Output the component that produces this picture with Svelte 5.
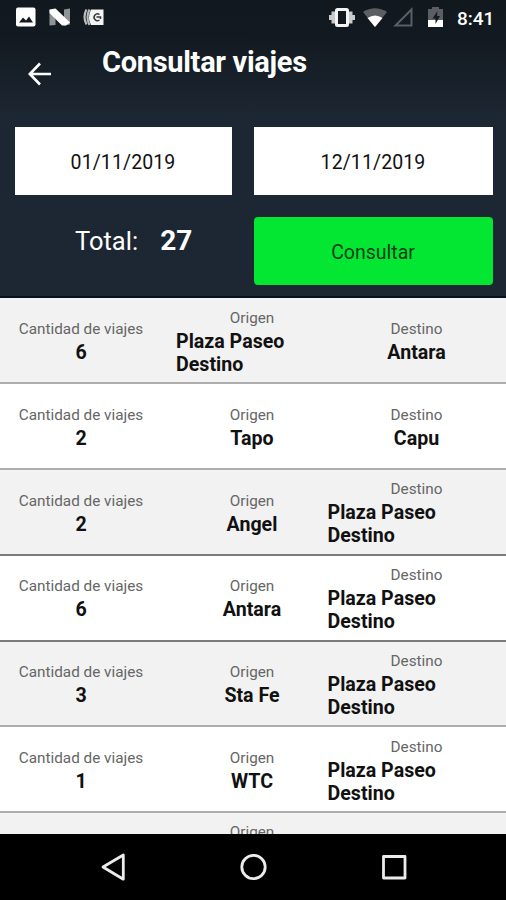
<script>
	let desde = '01/11/2019';
	let hasta = '12/11/2019';
	let total = 27;

	const PLAZA = 'Plaza Paseo Destino';

	let viajes = [
		{ cantidad: 6, origen: PLAZA, destino: 'Antara' },
		{ cantidad: 2, origen: 'Tapo', destino: 'Capu' },
		{ cantidad: 2, origen: 'Angel', destino: PLAZA },
		{ cantidad: 6, origen: 'Antara', destino: PLAZA },
		{ cantidad: 3, origen: 'Sta Fe', destino: PLAZA },
		{ cantidad: 1, origen: 'WTC', destino: PLAZA },
		{ cantidad: 1, origen: PLAZA, destino: 'Tapo' }
	];
</script>

<div class="screen">
	<header>
		<div class="status">
			<svg class="left-icons" width="90" height="22" viewBox="0 0 90 22">
				<rect x="0" y="0.500" width="19.500" height="19" rx="2" fill="#fff" />
				<path d="M3 15.500l4-5 3 3 3-4 4 6z" fill="#141a20" />
				<path d="M33.500 3h6v15l-6 .5zM48 2.500l6-1v16l-6 1z" fill="#8f9396" />
				<path d="M33.500 2.500l6-1 14.500 14-4 3h-4L33.500 6z" fill="#fff" />
				<path d="M75 2.500h12.500v15.500H75q-4-7 0-15.500z" fill="#f4f4f4" />
				<path d="M83.500 7.500a3.400 3.400 0 1 0 0 5.500M80.500 10h4v2" fill="none" stroke="#30363b" stroke-width="1.500" />
				<path d="M70.500 2.500q-4 7.500 0 15M73.500 2.500q-4 8 0 15.500" fill="none" stroke="#b9bbbd" stroke-width="2.200" />
			</svg>
			<svg class="right-icons" width="116" height="22" viewBox="0 0 116 22">
				<path d="M0 8h3v5H0zM2.500 4.500H6v12H2.500zM20 4.500h3.500v12H20zM23 8h3v5h-3z" fill="#c8cacc" />
				<rect x="7.500" y="2.500" width="11" height="16" rx="1" fill="none" stroke="#f4f4f4" stroke-width="3" />
				<path d="M34 5q12-7.500 24 0L46 20z" fill="#5b5f63" />
				<path d="M38.500 11q7.500-5 15 0L46 20z" fill="#fff" />
				<path d="M66.500 18.500h16v-16z" fill="none" stroke="#5b5f63" stroke-width="2" />
				<path d="M99 2h4V0h7v2h4v11H99z" fill="#5b5f63" />
				<path d="M99 13h15v7H99z" fill="#fff" />
				<path d="M108.500 4l-5 7.500h3V17l4.500-8h-3z" fill="#141a20" />
			</svg>
			<span class="clock">8:41</span>
		</div>

		<div class="titlebar">
			<svg class="back" width="24" height="24" viewBox="0 0 24 24">
				<path d="M23 12H2M12 1.500L1.800 12 12 22.500" fill="none" stroke="#fff" stroke-width="2.600" />
			</svg>
			<h1>Consultar viajes</h1>
		</div>

		<div class="filters">
			<button class="date">{desde}</button>
			<button class="date">{hasta}</button>
			<div class="total">
				<span>Total:</span>
				<strong>{total}</strong>
			</div>
			<button class="submit">Consultar</button>
		</div>
	</header>

	<main>
		{#each viajes as viaje}
			<div class="row">
				<div class="cell">
					<span class="label">Cantidad de viajes</span>
					<span class="value">{viaje.cantidad}</span>
				</div>
				<div class="cell">
					<span class="label">Origen</span>
					<span class="value">{viaje.origen}</span>
				</div>
				<div class="cell">
					<span class="label">Destino</span>
					<span class="value">{viaje.destino}</span>
				</div>
			</div>
		{/each}
	</main>

	<nav>
		<svg width="506" height="66" viewBox="0 0 506 66">
			<g fill="none" stroke="#ececec" stroke-width="2.800" stroke-linejoin="round">
				<path d="M123.300 21v24.200L103 33z" />
				<circle cx="253.500" cy="33" r="11.700" />
				<rect x="383.500" y="22.500" width="21.500" height="21.500" />
			</g>
		</svg>
	</nav>
</div>

<style>
	:global(body) {
		margin: 0;
		background: #000;
	}

	.screen {
		display: flex;
		flex-direction: column;
		width: 506px;
		height: 900px;
		overflow: hidden;
		font-family: Roboto, 'Liberation Sans', sans-serif;
		color: #111;
	}

	header {
		flex: none;
		box-sizing: border-box;
		height: 298.400px;
		background: linear-gradient(#11181e 0, #121920 36px, #1d2733 120px);
		border-bottom: 2px solid #0b1020;
	}

	.status {
		display: flex;
		align-items: center;
		height: 36px;
		padding: 0 11px 0 16px;
	}

	.right-icons {
		margin-left: auto;
	}

	.clock {
		width: 38px;
		margin-left: 12px;
		color: #fff;
		font-size: 19px;
		font-weight: 500;
		white-space: nowrap;
	}

	.titlebar {
		display: flex;
		height: 91px;
		color: #fff;
	}

	.back {
		margin: 26px 50px 0 28px;
	}

	h1 {
		margin: 9px 0 0;
		font-size: 29px;
		line-height: 34px;
		font-weight: 700;
		letter-spacing: -0.3px;
		white-space: nowrap;
	}

	.filters {
		display: grid;
		grid-template-columns: 217px 239px;
		grid-template-rows: 68px 68px;
		gap: 22px;
		padding-left: 14.500px;
	}

	button {
		padding: 2px 0 0;
		border: none;
		font-family: inherit;
		font-size: 19.500px;
		color: #111;
	}

	.date {
		background: #fff;
		letter-spacing: 0.1px;
	}

	.submit {
		background: #03e733;
		border-radius: 4px;
		color: #073d15;
	}

	.total {
		display: flex;
		align-items: baseline;
		gap: 22px;
		padding: 7px 0 0 60.500px;
		color: #fff;
		font-size: 25.500px;
		line-height: 34px;
	}

	.total strong {
		font-size: 28px;
	}

	main {
		flex: 1;
		min-height: 0;
		overflow: hidden;
	}

	.row {
		display: grid;
		grid-template-columns: 162px 152px 178px;
		column-gap: 14px;
		box-sizing: border-box;
		height: 85.800px;
		padding-top: 0.500px;
		border-bottom: 2px solid #adadad;
		background: #fff;
	}

	.row:nth-child(odd) {
		background: #f2f2f2;
	}

	.row:nth-child(3),
	.row:nth-child(4) {
		border-bottom-color: #7c7c7c;
	}

	.cell {
		display: flex;
		flex-direction: column;
		align-items: center;
		justify-content: center;
	}

	.cell:last-child {
		margin-left: -14.500px;
		width: 178px;
	}

	.label {
		font-size: 15.300px;
		line-height: 24px;
		color: #666;
	}

	.value {
		font-size: 19.600px;
		line-height: 23px;
		font-weight: 700;
	}

	nav {
		flex: none;
		height: 66px;
		background: #000;
	}
</style>
